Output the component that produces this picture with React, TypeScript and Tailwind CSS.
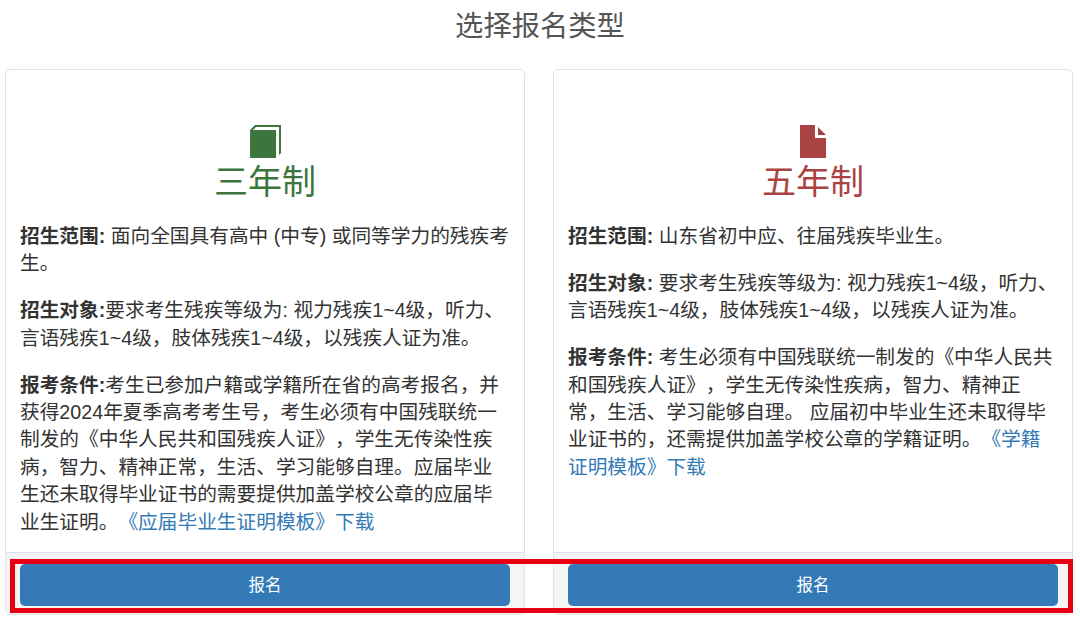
const FONT = "font-['Liberation_Sans','Noto_Sans_CJK_SC',sans-serif]";

function BookIcon() {
  return (
    <svg viewBox="0 0 31 33" className="w-[31px] h-[33px] fill-[#3c763d]">
      <path d="M5 0H31V28L29 30V2H6L3 5H26V33H0V5Z" />
    </svg>
  );
}

function FileIcon() {
  return (
    <svg viewBox="0 0 26 33" className="w-[26px] h-[33px] fill-[#a94442]">
      <path d="M0 0H15V13H26V33H0Z" />
      <path d="M18 2L26 10H18Z" />
    </svg>
  );
}

function Card({
  icon,
  title,
  color,
  children,
}: {
  icon: React.ReactNode;
  title: string;
  color: string;
  children: React.ReactNode;
}) {
  return (
    <div className="w-[520px] h-[546px] flex flex-col border border-[#e3e3e3] rounded-[5px] bg-white overflow-hidden">
      <div className="flex-1 px-[14px]">
        <div className={`flex flex-col items-center pt-[55px] ${color}`}>
          {icon}
          <h3 className="mt-[2px] text-[34px] leading-[44px] font-normal">{title}</h3>
        </div>
        <div className="mt-[19px] space-y-[19.5px] text-[19.7px] leading-[27.4px] text-[#333] [text-spacing-trim:space-all]">
          {children}
        </div>
      </div>
      <div className="h-[62px] px-[14px] pt-[11px] bg-[#f5f5f5] border-t border-[#e3dfe6]">
        <button className="w-full h-[42px] rounded-[5px] bg-[#337ab7] text-white text-[16.5px]">报名</button>
      </div>
    </div>
  );
}

export default function App() {
  return (
    <div className={`relative h-[618px] overflow-hidden bg-white ${FONT}`}>
      <h2 className="h-[69px] pt-[7px] text-center text-[28.3px] leading-[38px] font-normal text-[#555]">选择报名类型</h2>
      <div className="flex gap-[28px] pl-[5px]">
        <Card icon={<BookIcon />} title="三年制" color="text-[#3c763d]">
          <p>
            <b>招生范围:</b> 面向全国具有高中 (中专) 或同等学力的残疾考生。
          </p>
          <p>
            <b>招生对象:</b>要求考生残疾等级为: 视力残疾1~4级，听力、言语残疾1~4级，肢体残疾1~4级，以残疾人证为准。
          </p>
          <p>
            <b>报考条件:</b>考生已参加户籍或学籍所在省的高考报名，并获得2024年夏季高考考生号，考生必须有中国残联统一制发的《中华人民共和国残疾人证》，学生无传染性疾病，智力、精神正常，生活、学习能够自理。应届毕业生还未取得毕业证书的需要提供加盖学校公章的应届毕业生证明。
            <a className="text-[#337ab7]">《应届毕业生证明模板》下载</a>
          </p>
        </Card>
        <Card icon={<FileIcon />} title="五年制" color="text-[#a94442]">
          <p>
            <b>招生范围:</b> 山东省初中应、往届残疾毕业生。
          </p>
          <p>
            <b>招生对象:</b> 要求考生残疾等级为: 视力残疾1~4级，听力、言语残疾1~4级，肢体残疾1~4级，以残疾人证为准。
          </p>
          <p>
            <b>报考条件:</b> 考生必须有中国残联统一制发的《中华人民共和国残疾人证》，学生无传染性疾病，智力、精神正常，生活、学习能够自理。 应届初中毕业生还未取得毕业证书的，还需提供加盖学校公章的学籍证明。
            <a className="text-[#337ab7]">《学籍证明模板》下载</a>
          </p>
        </Card>
      </div>
      {/* red highlight drawn over the buttons */}
      <div className="absolute left-[10px] top-[559px] w-[1063px] h-[54px] border-[5px] border-[#e60012]" />
    </div>
  );
}
